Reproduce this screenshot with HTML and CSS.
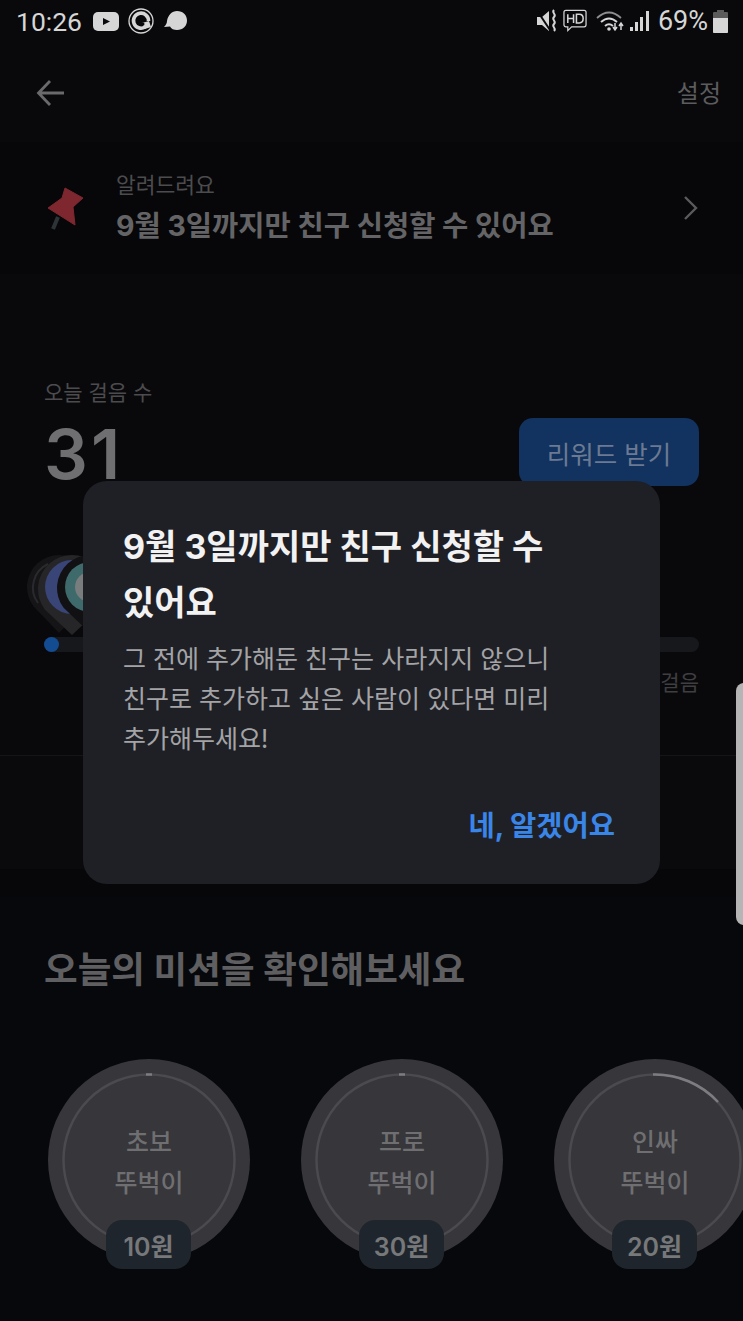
FILE: index.html
```html
<!DOCTYPE html>
<html lang="ko">
<head>
<meta charset="utf-8">
<title>뚜벅이</title>
<link rel="stylesheet" href="styles.css">
</head>
<body>
<div class="screen">
  <div class="status">
    <div class="status-left">
      <span class="time">10:26</span>
      <svg class="ic-yt" viewBox="0 0 26 19"><rect width="26" height="19" rx="5" fill="#d6d6d6"/><path d="M10 6l7 3.500-7 3.500z" fill="#08090c"/></svg>
      <svg class="ic-sync" viewBox="0 0 26 26"><circle cx="13" cy="13" r="12" fill="none" stroke="#d6d6d6" stroke-width="1.300"/><path d="M17 19A7.500 7.500 0 1 1 20.500 13" fill="none" stroke="#d6d6d6" stroke-width="3.600"/><path d="M14 15l7-2 2 6-6 2z" fill="#d6d6d6"/><circle cx="15" cy="16" r="1.500" fill="#08090c"/></svg>
      <svg class="ic-bubble" viewBox="0 0 23 20"><path d="M13 0c6 0 10 4 10 9.500s-4 9.500-10 9.500c-3 0-6-1-7-3.500L0 16c2-2 3-4 3-6C4 4 8 0 13 0z" fill="#d6d6d6"/></svg>
    </div>
    <div class="status-right">
      <svg class="ic-mute" viewBox="0 0 22 24"><path d="M0 8h5l7-6v20l-7-6H0z" fill="#d6d6d6"/><path d="M1 3l12 18" stroke="#08090c" stroke-width="2"/><path d="M17 1c-3 3 3 4 0 7s3 4 0 7 3 4 0 7" fill="none" stroke="#d6d6d6" stroke-width="2"/></svg>
      <svg class="ic-hd" viewBox="0 0 25 24"><path d="M3 1h19a2 2 0 0 1 2 2v13a2 2 0 0 1-2 2H9l-4 4v-4H3a2 2 0 0 1-2-2V3a2 2 0 0 1 2-2z" fill="none" stroke="#d6d6d6" stroke-width="1.300"/><path d="M5 5v9M11 5v9M5 9.500h6M14 5v9h3q4 0 4-4.500T17 5z" fill="none" stroke="#d6d6d6" stroke-width="1.600"/></svg>
      <svg class="ic-wifi" viewBox="0 0 28 22"><path d="M1 8q12-11 24 0" fill="none" stroke="#8e8e8e" stroke-width="1.800"/><path d="M5 12q8-7 16 0M9 16q4-3.500 8 0" fill="none" stroke="#d6d6d6" stroke-width="2"/><circle cx="13" cy="19" r="1.800" fill="#d6d6d6"/><path d="M19 13v6M17 17l2 3 2-3M25 20v-6M23 16l2-3 2 3" fill="none" stroke="#d6d6d6" stroke-width="1.500"/></svg>
      <svg class="ic-signal" viewBox="0 0 19 22"><rect x="0" y="17" width="3" height="4" fill="#d6d6d6"/><rect x="5" y="12" width="3" height="9" fill="#d6d6d6"/><rect x="10" y="7" width="3" height="14" fill="#d6d6d6"/><rect x="16" y="1" width="3" height="20" fill="#d6d6d6"/></svg>
      <span class="pct">69%</span>
      <svg class="ic-batt" viewBox="0 0 15 23"><path d="M4 0h7v2h3a1 1 0 0 1 1 1v19a1 1 0 0 1-1 1H1a1 1 0 0 1-1-1V3a1 1 0 0 1 1-1h3z" fill="#5b5b5b"/><path d="M0 8h15v14a1 1 0 0 1-1 1H1a1 1 0 0 1-1-1z" fill="#d6d6d6"/></svg>
    </div>
  </div>

  <div class="topbar">
    <svg class="ic-back" viewBox="0 0 30 30"><path d="M28 15H3M14 3L2.500 15 14 27" fill="none" stroke="#6a6a6c" stroke-width="2.800"/></svg>
    <span class="settings">설정</span>
  </div>

  <div class="notice">
    <svg class="ic-pin" viewBox="0 0 37 44"><path d="M11 30L6 42" stroke="#2e3338" stroke-width="4"/><path d="M18 1L36 11 26 20 28 38 1 21 15 11z" fill="#7e272f" stroke="#7e272f" stroke-width="1" stroke-linejoin="round"/></svg>
    <div class="notice-text">
      <div class="notice-label">알려드려요</div>
      <div class="notice-title">9월 3일까지만 친구 신청할 수 있어요</div>
    </div>
    <svg class="ic-chev" viewBox="0 0 16 26"><path d="M2 2l11 11L2 24" fill="none" stroke="#5a5a5c" stroke-width="2.400"/></svg>
  </div>

  <div class="steps">
    <div class="steps-label">오늘 걸음 수</div>
    <div class="steps-row">
      <span class="steps-num">31</span>
      <span class="reward">리워드 받기</span>
    </div>
    <svg class="markers" viewBox="0 0 110 82">
      <path d="M35 78L9.400 51.200A32 32 0 1 1 60.600 51.200Z" fill="#151518"/>
      <path d="M24 9A26 26 0 0 0 14 48" fill="none" stroke="#2a2a2e" stroke-width="2"/>
      <path d="M48 80L20.800 54.400A34 34 0 1 1 75.200 54.400Z" fill="#262629"/>
      <circle cx="48" cy="32" r="27" fill="#3a4577"/>
      <path d="M66 78L39.600 52.800A33 33 0 1 1 92.400 52.800Z" fill="#111114"/>
      <circle cx="66" cy="32" r="25" fill="#3f6a6b"/>
      <circle cx="66" cy="32" r="15" fill="#7a7d7d"/>
    </svg>
    <div class="track"><span class="track-dot"></span></div>
    <div class="track-end">걸음</div>
  </div>

  <div class="band"></div>

  <div class="missions">
    <h2 class="missions-title">오늘의 미션을 확인해보세요</h2>
    <div class="mission-row">
      <div class="mission">
        <svg class="ring" viewBox="0 0 202 202"><circle cx="101" cy="101" r="101" fill="#36363b"/><circle cx="101" cy="101" r="85.500" fill="none" stroke="#4a4a4f" stroke-width="2.500"/><path d="M98 15.500h6" stroke="#7d7d80" stroke-width="2.500"/></svg>
        <div class="mission-name">초보<br>뚜벅이</div>
        <div class="price">10원</div>
      </div>
      <div class="mission">
        <svg class="ring" viewBox="0 0 202 202"><circle cx="101" cy="101" r="101" fill="#36363b"/><circle cx="101" cy="101" r="85.500" fill="none" stroke="#4a4a4f" stroke-width="2.500"/><path d="M98 15.500h6" stroke="#7d7d80" stroke-width="2.500"/></svg>
        <div class="mission-name">프로<br>뚜벅이</div>
        <div class="price">30원</div>
      </div>
      <div class="mission">
        <svg class="ring" viewBox="0 0 202 202"><circle cx="101" cy="101" r="101" fill="#36363b"/><circle cx="101" cy="101" r="85.500" fill="none" stroke="#4a4a4f" stroke-width="2.500"/><path d="M99 15.500A85.500 85.500 0 0 1 164 43" fill="none" stroke="#7d7d80" stroke-width="2.500"/></svg>
        <div class="mission-name">인싸<br>뚜벅이</div>
        <div class="price">20원</div>
      </div>
    </div>
  </div>

  <div class="modal">
    <h1 class="modal-title">9월 3일까지만 친구 신청할 수 있어요</h1>
    <p class="modal-body">그 전에 추가해둔 친구는 사라지지 않으니<br>친구로 추가하고 싶은 사람이 있다면 미리<br>추가해두세요!</p>
    <div class="modal-actions"><span class="modal-ok">네, 알겠어요</span></div>
  </div>

  <div class="edge-panel"></div>
</div>
</body>
</html>
```

FILE: styles.css
```css
* { box-sizing: border-box; }
html, body { margin: 0; padding: 0; background: #09090c; }
.screen {
  position: relative;
  width: 743px;
  height: 1321px;
  overflow: hidden;
  background: #09090c;
  font-family: "Inter", "Noto Sans CJK KR", sans-serif;
}
.status {
  height: 44px;
  padding: 0 15px 2px 16px;
  display: flex;
  align-items: center;
  justify-content: space-between;
  color: #d6d6d6;
  font-family: "Roboto", sans-serif;
  font-size: 27px;
}
.status-left, .status-right { display: flex; align-items: center; }
.time { width: 77px; font-size: 26.500px; }
.ic-yt { width: 26px; height: 19px; }
.ic-sync { width: 26px; height: 26px; margin-left: 9px; }
.ic-bubble { width: 23px; height: 20px; margin-left: 10px; }
.ic-mute { width: 22px; height: 24px; }
.ic-hd { width: 24px; height: 24px; margin-left: 4px; }
.ic-wifi { width: 28px; height: 22px; margin-left: 9px; }
.ic-signal { width: 19px; height: 22px; margin-left: 6px; }
.pct { margin-left: 9px; }
.ic-batt { width: 15px; height: 23px; margin-left: 5px; }

.topbar {
  height: 98px;
  padding: 0 22px 0 36px;
  display: flex;
  align-items: center;
  justify-content: space-between;
}
.ic-back { width: 30px; height: 30px; }
.settings { font-size: 24px; color: #5c5c5e; margin-bottom: 3px; }

.notice {
  height: 132px;
  padding: 0 44px 0 47px;
  display: flex;
  align-items: center;
  background: #070709;
}
.ic-pin { width: 37px; height: 44px; flex: none; margin-top: 1px; }
.notice-text { margin-left: 32px; flex: 1; padding-top: 1px; }
.notice-label { font-size: 21.500px; line-height: 30px; color: #4c4c4e; }
.notice-title { margin-top: 5px; font-size: 28.500px; line-height: 42px; font-weight: 700; color: #646466; }
.ic-chev { width: 16px; height: 26px; }

.steps { position: relative; height: 481px; padding: 104px 44px 0; }
.steps-label { font-size: 21px; line-height: 30px; color: #4c4c4e; }
.steps-row { display: flex; justify-content: space-between; align-items: flex-start; margin-top: 10px; }
.steps-num { font-size: 69px; line-height: 72px; font-weight: 600; color: #6f6f71; letter-spacing: 3px; }
.reward {
  width: 180px;
  height: 68px;
  border-radius: 14px;
  background: #123260;
  color: #6b7a92;
  font-size: 25.500px;
  display: flex;
  align-items: center;
  justify-content: center;
}
.markers { position: absolute; left: 24px; top: 281px; width: 110px; height: 82px; }
.track {
  position: absolute;
  left: 44px;
  right: 44px;
  top: 363px;
  height: 15px;
  border-radius: 8px;
  background: #17181c;
}
.track-dot { display: block; width: 15px; height: 15px; border-radius: 50%; background: #144c92; }
.track-end { position: absolute; right: 44px; top: 394px; font-size: 21px; line-height: 30px; color: #3f3f41; }

.band {
  height: 142px;
  border-top: 1px solid #141518;
  background: linear-gradient(#0a0a0c 0, #0a0a0c 113px, #070709 113px);
}

.missions { padding: 47px 0 0 44px; background: #07080b; height: 424px; }
.missions-title { margin: 0; font-size: 36.600px; line-height: 52px; font-weight: 700; color: #5f5f61; }
.mission-row { display: flex; gap: 51px; margin-top: 63px; margin-left: 4px; }
.mission { position: relative; width: 202px; height: 210px; flex: none; }
.ring { position: absolute; left: 0; top: 0; width: 202px; height: 202px; }
.mission-name {
  position: absolute;
  left: 0;
  right: 0;
  top: 63px;
  text-align: center;
  font-size: 25px;
  line-height: 41px;
  font-weight: 500;
  color: #6f6f71;
}
.price {
  position: absolute;
  left: 58px;
  width: 85px;
  top: 161px;
  height: 49px;
  border-radius: 16px;
  background: #1f252c;
  color: #77787a;
  font-size: 25px;
  font-weight: 600;
  display: flex;
  align-items: center;
  justify-content: center;
}

.modal {
  position: absolute;
  left: 83px;
  top: 481px;
  width: 577px;
  height: 403px;
  padding: 38px 40px 0;
  border-radius: 24px;
  background: #1f2026;
}
.modal-title { margin: 0; font-size: 34px; line-height: 56px; font-weight: 700; color: #f2f2f3; word-break: keep-all; }
.modal-body { margin: 8px 0 0; font-size: 25px; line-height: 40px; color: #a4a4a7; }
.modal-actions { display: flex; justify-content: flex-end; margin-top: 47px; margin-right: 5px; }
.modal-ok { font-size: 28.500px; line-height: 40px; font-weight: 700; color: #3a86e8; }

.edge-panel {
  position: absolute;
  left: 736px;
  top: 683px;
  width: 12px;
  height: 242px;
  border-radius: 8px 0 0 8px;
  background: #b5b5b5;
}
```
